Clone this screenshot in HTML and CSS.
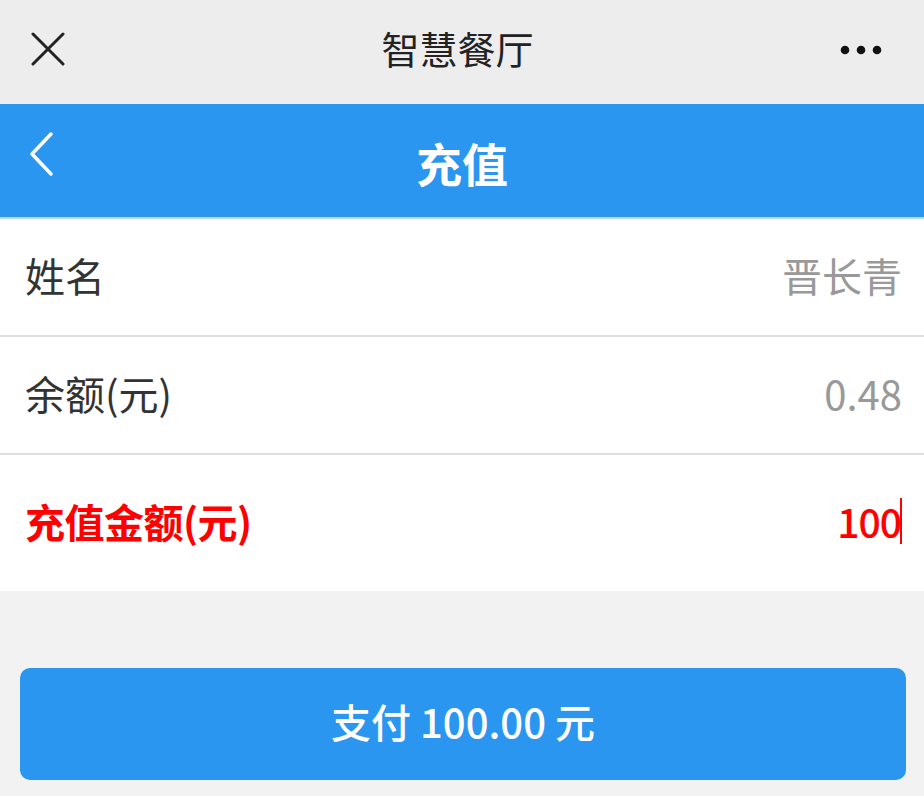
FILE: index.html
```html
<!DOCTYPE html>
<html lang="zh-CN">
<head>
  <meta charset="UTF-8">
  <meta name="viewport" content="width=device-width, initial-scale=1.0">
  <title>智慧餐厅</title>
  <link rel="stylesheet" href="styles.css">
</head>
<body>
  <header class="topbar">
    <svg class="close-icon" width="34" height="34" viewBox="0 0 34 34">
      <path d="M2 2 L32 32 M32 2 L2 32" stroke="#222" stroke-width="3" stroke-linecap="round" fill="none"/>
    </svg>
    <h1 class="topbar-title">智慧餐厅</h1>
    <svg class="more-icon" width="44" height="12" viewBox="0 0 44 12">
      <circle cx="5" cy="6" r="4.3" fill="#111"/>
      <circle cx="21" cy="6" r="4.3" fill="#111"/>
      <circle cx="37" cy="6" r="4.3" fill="#111"/>
    </svg>
  </header>

  <nav class="navbar">
    <svg class="back-icon" width="26" height="46" viewBox="0 0 26 46">
      <path d="M22 3 L3 23 L22 43" stroke="#fff" stroke-width="3.5" stroke-linecap="round" stroke-linejoin="round" fill="none"/>
    </svg>
    <h2 class="navbar-title">充值</h2>
    <span></span>
  </nav>

  <form class="recharge-form">
    <div class="form-row">
      <label>姓名</label>
      <span class="value">晋长青</span>
    </div>
    <div class="form-row">
      <label>余额(元)</label>
      <span class="value">0.48</span>
    </div>
    <div class="form-row form-row-amount">
      <label>充值金额(元)</label>
      <span class="value amount">100<i class="caret"></i></span>
    </div>
  </form>

  <div class="actions">
    <button type="button" class="pay-button">支付 100.00 元</button>
  </div>
</body>
</html>
```

FILE: styles.css
```css
body {
  margin: 0;
  padding: 0;
  font-family: "Noto Sans CJK SC", "Noto Sans", sans-serif;
  background-color: #f2f2f2;
  color: #333;
}
.topbar {
  height: 104px;
  background-color: #ededed;
  display: flex;
  align-items: center;
  justify-content: space-between;
  padding: 0 40px 0 31px;
  box-sizing: border-box;
}
.close-icon {
  margin-top: -6px;
}
.topbar-title {
  margin: 0 0 10px;
  font-size: 38px;
  font-weight: 400;
  color: #222;
  padding-left: 10px;
}
.more-icon {
  margin-top: -4px;
}
.navbar {
  height: 113px;
  background-color: #2a96ef;
  border-bottom: 2px solid #bcdaf2;
  display: grid;
  grid-template-columns: 1fr auto 1fr;
  align-items: center;
}
.back-icon {
  align-self: start;
  margin: 27px 0 0 29px;
}
.navbar-title {
  margin: 0;
  padding-top: 2px;
  font-size: 46px;
  font-weight: 700;
  color: #fff;
}
.recharge-form {
  background-color: #fff;
}
.form-row {
  height: 116px;
  display: flex;
  align-items: center;
  justify-content: space-between;
  padding: 0 22px 0 25px;
  border-bottom: 2px solid #dedede;
  font-size: 40px;
}
.form-row label {
  color: #333;
  margin-top: -4px;
}
.form-row .value {
  color: #999;
  margin-top: -4px;
}
.form-row-amount {
  height: 136px;
  border-bottom: none;
  box-sizing: border-box;
}
.form-row-amount label {
  color: #f00;
  font-weight: 700;
  letter-spacing: -0.5px;
}
.form-row .amount {
  color: #f00;
  font-weight: 500;
  font-size: 39px;
  letter-spacing: -1px;
  display: flex;
  align-items: center;
}
.caret {
  display: inline-block;
  width: 2px;
  height: 46px;
  background-color: #f00;
  margin-left: -1px;
}
.actions {
  padding: 77px 18px 17px 20px;
}
.pay-button {
  width: 100%;
  height: 112px;
  border: none;
  border-radius: 10px;
  background-color: #2a96ef;
  color: #fff;
  font-family: "Noto Sans CJK SC", "Noto Sans", sans-serif;
  font-size: 40px;
  font-weight: 500;
  padding-bottom: 8px;
  cursor: pointer;
}
```
